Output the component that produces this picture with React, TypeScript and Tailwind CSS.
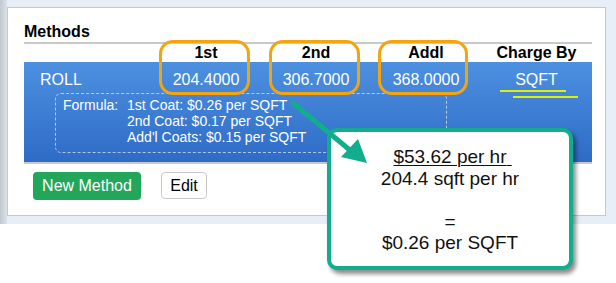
import React from "react";

const cols = "grid grid-cols-[127px_110px_110px_110px_111px]";

export default function App() {
  return (
    <div className="relative w-[616px] h-[283px] overflow-hidden bg-white font-['Liberation_Sans',Arial,sans-serif] text-black">
      {/* page background */}
      <div className="flex h-[224px] bg-[#e8eef8]">
        <div className="w-[7px] h-full bg-linear-to-r from-[#c3c7cf] to-[#dde1e8]" />
        <div className="pt-[7px]">
          <div className="w-[599px] h-[209px] border border-[#c8c8c8] bg-white pl-4 pr-[13px] pt-[15px]">
            <div className="border-b-2 border-[#c9c9c9] pb-[1px] text-[16px] leading-[18px] font-bold">Methods</div>

            {/* header row */}
            <div className={`${cols} h-[18px] text-[16px] leading-[18px] font-bold text-center`}>
              <div />
              <div>1st</div>
              <div>2nd</div>
              <div>Addl</div>
              <div>Charge By</div>
            </div>

            {/* method row */}
            <div className="bg-linear-to-b from-[#4d90e0] to-[#2e6bc6] border-b-2 border-[#c9c9c9] pt-[9px] pb-[9px] text-white">
              <div className={`${cols} text-[16px] leading-[18px] text-center`}>
                <div className="text-left pl-4">ROLL</div>
                <div>204.4000</div>
                <div>306.7000</div>
                <div>368.0000</div>
                <div>SQFT</div>
              </div>
              <div className="ml-[31px] mt-[4px] w-[392px] border border-dashed border-white/60 rounded-[6px] pl-[7px] pt-[3px] pb-[7px] text-[14px] leading-[16px]">
                <div className="grid grid-cols-[64px_1fr]">
                  <div>Formula:</div>
                  <div>
                    <div>1st Coat: $0.26 per SQFT</div>
                    <div>2nd Coat: $0.17 per SQFT</div>
                    <div>Add'l Coats: $0.15 per SQFT</div>
                  </div>
                </div>
              </div>
            </div>

            {/* actions */}
            <div className="flex gap-5 ml-[9px] mt-[8px]">
              <button className="w-[108px] h-[28px] rounded-[4px] bg-[#22a65a] text-white text-[16px] leading-[18px]">
                New Method
              </button>
              <button className="w-[46px] h-[27px] rounded-[4px] border border-[#c8c8c8] bg-white text-black text-[16px] leading-[18px]">
                Edit
              </button>
            </div>
          </div>
        </div>
      </div>

      {/* orange highlight rings */}
      <div className="absolute left-[159px] top-[40px] w-[91px] h-[55px] rounded-[14px] border-[3px] border-[#f4a40c]" />
      <div className="absolute left-[269px] top-[40px] w-[91px] h-[55px] rounded-[14px] border-[3px] border-[#f4a40c]" />
      <div className="absolute left-[378px] top-[40px] w-[90px] h-[55px] rounded-[14px] border-[3px] border-[#f4a40c]" />

      {/* yellow marks under SQFT */}
      <div className="absolute left-[500px] top-[90px] w-[66px] h-[2px] bg-[#e2ef00]" />
      <div className="absolute left-[513px] top-[96px] w-[65px] h-[2px] bg-[#e2ef00]" />

      {/* callout */}
      <div className="absolute left-[327px] top-[128px] w-[246px] h-[142px] rounded-[10px] border-4 border-[#12ad8d] bg-white shadow-[3px_4px_4px_rgba(0,0,0,0.45)] pt-[14px] text-center text-[19px] leading-[21.6px] text-[#111]">
        <div>
          {"\u00a0"}
          <span className="underline underline-offset-[2px] decoration-1">$53.62 per hr{"\u00a0"}</span>
        </div>
        <div>204.4 sqft per hr</div>
        <div>&nbsp;</div>
        <div>=</div>
        <div>$0.26 per SQFT</div>
      </div>

      {/* arrow */}
      <svg className="absolute left-0 top-0 pointer-events-none" width="616" height="283" viewBox="0 0 616 283">
        <line x1="293" y1="103" x2="351" y2="151" stroke="#12ad8d" strokeWidth="5" strokeLinecap="round" />
        <polygon points="367,163 341,157 358,139" fill="#12ad8d" />
      </svg>
    </div>
  );
}
